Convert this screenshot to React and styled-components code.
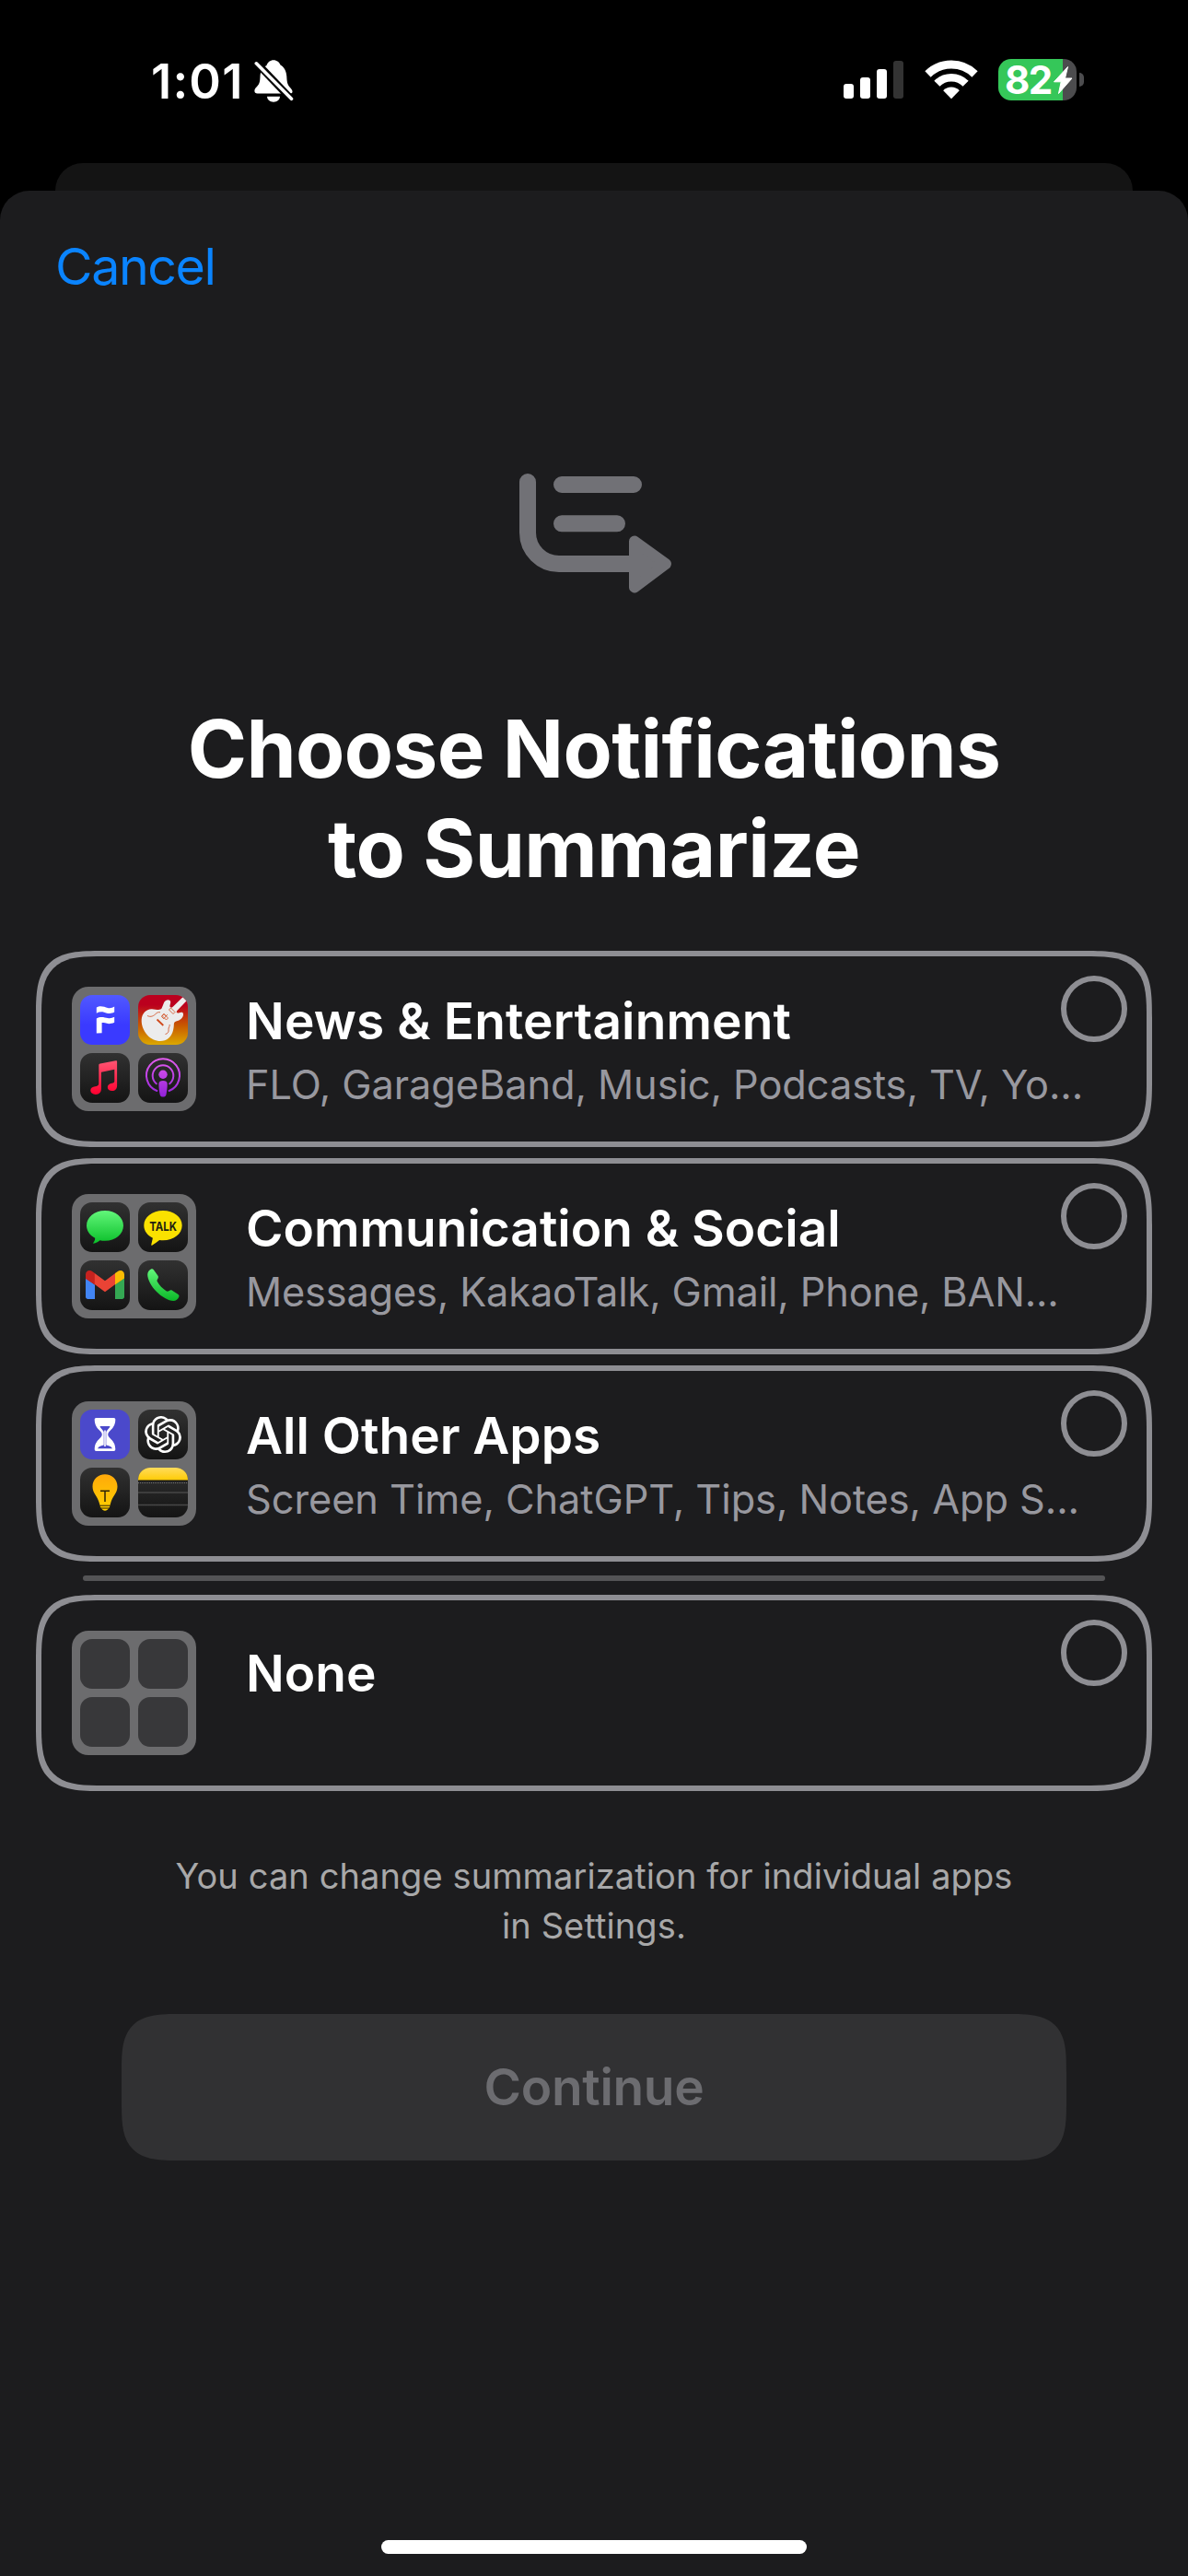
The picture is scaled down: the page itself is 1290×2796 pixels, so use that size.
import styled, { createGlobalStyle } from "styled-components"
import { SiOpenai } from "react-icons/si"

const GlobalStyle = createGlobalStyle`
* { box-sizing: border-box; }
body {
  margin: 0;
  background: #000;
  font-family: Inter, "Liberation Sans", sans-serif;
}
`
const Screen = styled.div`
display:flex;
flex-direction:column;
width:1290px;
height:2796px;
overflow:hidden;
background:#000;
`
const StatusBar = styled.header`
display:flex;
justify-content:space-between;
align-items:flex-start;
height:177px;
padding:64px 113px 0 164px;
color:#fff;
`
const StatusLeft = styled.div`
display:flex;
gap:16px;
`
const Time = styled.div`
width:96px;
font-size:52.5px;
font-weight:600;
line-height:48px;
letter-spacing:1.2px;
white-space:nowrap;
`
const StatusRight = styled.div`
display:flex;
align-items:flex-start;
`
const Signal = styled.div`
display:flex;
align-items:flex-end;
gap:7px;
height:43px;
margin-right:23px;
`
const SignalBar = styled.div`
width:11px;
height:${props => props.$height}px;
border-radius:3px;
background:${props => props.$off ? '#333333' : '#fff'};
`
const WifiIcon = styled.svg`
width:58px;
height:44px;
margin-right:22px;
`
const Battery = styled.div`
display:flex;
align-items:center;
gap:3px;
`
const BatteryBody = styled.div`
display:flex;
align-items:center;
width:85px;
height:45px;
padding-left:7px;
border-radius:14px;
background:linear-gradient(to right, #35c759 70px, #4c4c4e 70px);
font-size:42px;
font-weight:700;
letter-spacing:-1.5px;
line-height:45px;
`
const BatteryLevel = styled.span`
width:52px;
`
const BatteryCap = styled.div`
width:5px;
height:15px;
border-radius:0 5px 5px 0;
background:#4c4c4e;
`
const BackSheet = styled.div`
height:30px;
margin:0 60px;
border-radius:30px 30px 0 0;
background:#141414;
`
const Sheet = styled.main`
display:flex;
flex-direction:column;
flex:1;
padding-top:49px;
border-radius:32px 32px 0 0;
background:#1c1c1e;
`
const Cancel = styled.button`
align-self:flex-start;
margin:0 0 190px 60px;
padding:0;
border:0;
background:none;
color:#0a84ff;
font:400 55.5px/66px Inter, sans-serif;
letter-spacing:-1.4px;
`
const HeroIcon = styled.svg`
display:block;
width:170px;
height:135px;
margin:0 0 112px 562px;
`
const Title = styled.h1`
margin:0 0 57px;
text-align:center;
color:#fff;
font-size:87px;
font-weight:700;
line-height:108px;
letter-spacing:-0.6px;
`
const Options = styled.div`
display:flex;
flex-direction:column;
gap:12px;
margin:0 39px;
`
const Card = styled.div`
display:grid;
grid-template-columns:135px 1fr 72px;
grid-template-rows:100px 101px;
height:213px;
padding:0 21px 0 33px;
border:6px solid #8e8e93;
border-radius:54px;
@supports (corner-shape: superellipse(1.7)) {
  border-radius:73px;
  corner-shape:superellipse(1.7);
}
`
const Folder = styled.div`
grid-row:1 / 3;
display:grid;
grid-template-columns:54px 54px;
grid-template-rows:54px 54px;
gap:9px;
align-self:center;
height:135px;
padding:9px;
border-radius:18px;
background:#6c6c6e;
`
const AppTile = styled.div`
display:flex;
align-items:center;
justify-content:center;
overflow:hidden;
border-radius:13px;
background:${props => props.$bg || 'linear-gradient(#313131, #141414)'};
color:#fff;
`
const CardTitle = styled.div`
margin:${props => props.$solo ? 49 : 40}px 0 0 54px;
color:#fff;
font-size:55px;
font-weight:600;
line-height:60px;
letter-spacing:${props => props.$spacing || 0}px;
white-space:nowrap;
`
const CardApps = styled.div`
grid-column:2 / 4;
margin:13px 0 0 54px;
color:#98989f;
font-size:43.3px;
line-height:52px;
letter-spacing:${props => props.$spacing || 0}px;
white-space:nowrap;
`
const Radio = styled.div`
width:72px;
height:72px;
margin-top:21px;
border:6px solid #8e8e93;
border-radius:50%;
`
const Divider = styled.div`
height:6px;
margin:3px 51px;
border-radius:3px;
background:#545456;
`
const Note = styled.p`
margin:65px 0 69px;
text-align:center;
color:#a8a8a9;
font-size:38px;
line-height:54px;
letter-spacing:0.1px;
`
const Continue = styled.button`
height:159px;
margin:0 132px;
padding:0 0 1px;
border:0;
background:#313133;
color:#6c6c70;
font:600 55px/60px Inter, sans-serif;
letter-spacing:-0.3px;
border-radius:44px;
@supports (corner-shape: superellipse(1.7)) {
  border-radius:64px;
  corner-shape:superellipse(1.7);
}
`
const HomeIndicator = styled.div`
width:462px;
height:15px;
margin:auto auto 24px;
border-radius:8px;
background:#fff;
`

const Art = ({ children }) => <svg width="54" height="54" viewBox="0 0 54 54">{children}</svg>

const Gradient = ({ id, from, to }) => (
  <linearGradient id={id} x1="0" y1="0" x2="0" y2="1">
    <stop offset="0" stopColor={from} />
    <stop offset="1" stopColor={to} />
  </linearGradient>
)

const Flo = () => (
  <AppTile $bg="linear-gradient(#5159ff, #3a3aff 60%)">
    <Art>
      <g fill="#fff">
        <path d="M17.8 13.6C22 11 26.500 13.200 30 14C32.500 14.500 35 14 37.200 12.600V18.600C33 21 29.500 19.800 26 18.700C23 17.900 20.500 18.300 17.800 19.700Z" />
        <path d="M17.8 25.500C22 22.800 26.500 24.300 30 25C32.500 25.500 35 25 37.200 23.800V29.700C33 31.600 30 31.400 27 30.300C25.500 29.800 24.500 29.800 23.600 30V41.200L17.800 41.600Z" />
      </g>
    </Art>
  </AppTile>
)

const GarageBand = () => (
  <AppTile $bg="linear-gradient(#bb001e 20%, #c85a00 62%, #dba800)">
    <Art>
      <path fill="#ececec" d="M25.500 14.600C27 12 27.500 7.500 30 6C32 4.600 35 5 35.200 7.500C35.400 9.500 33.700 12 35 13.200C36 14 37 13.600 38 12.600L48.500 2.200L52.600 6.200L42.300 17C41 18.500 42 20 44 19.500C46 19 48.500 17.800 49 20.500C49.500 23.500 46.500 27 43 28C39.500 28.800 39 29.500 38.800 33C38.500 40 35.500 47 29 49.300C22 51.500 14.500 48.500 10 43.500C5.500 38.500 3.300 32 3.700 26.500C4.200 20 8.500 15.500 14.500 15.200C18.500 15 23.500 17.500 25.500 14.600Z" />
      <g fill="none" stroke="#cf4a1c" strokeWidth="0.8">
        <path d="M10 22.500C14 24.500 17 22.500 19 20.500C20.500 19 22 18.300 24 18.800" />
        <path d="M28 20.500L30.200 22.800L31.500 21.500L27.800 25.800L25.500 23.500Z" />
        <path d="M33.500 16L35.500 14L40 18.500L38 20.500ZM26 22.500L28 20.500L32.500 25L30.500 27Z" />
        <path d="M20.500 26.500L27.300 33" strokeWidth="1.800" />
        <path d="M29.500 42.500C32 42 33.500 40 33 37.500C32.700 35.500 34.500 34 34.200 32" />
      </g>
    </Art>
  </AppTile>
)

const Music = () => (
  <AppTile>
    <Art>
      <defs><Gradient id="music" from="#ff5572" to="#ff0030" /></defs>
      <path fill="url(#music)" d="M20.300 13.200C20.300 12.200 20.800 11.700 21.700 11.500L38.700 8.200C39.600 8 40.100 8.500 40.100 9.400V35.500C40.100 39 38 41 34.800 41C31.800 41 29.800 39.500 29.800 37C29.800 34.500 31.800 33.200 34.500 32.700C36.500 32.300 37.300 31.700 37.300 30.200V17.700L22.900 20.800V39C22.900 42.500 20.500 44.900 17 44.900C13.500 44.900 11.300 43 11.300 40.600C11.300 38 13.500 36.800 16.300 36.300C18.700 35.900 20.300 35.200 20.300 33Z" />
    </Art>
  </AppTile>
)

const Podcasts = () => (
  <AppTile>
    <Art>
      <defs>
        <linearGradient id="pod" gradientUnits="userSpaceOnUse" x1="0" y1="6" x2="0" y2="48">
          <stop offset="0" stopColor="#e45cf0" />
          <stop offset="1" stopColor="#9020d8" />
        </linearGradient>
      </defs>
      <g fill="none" stroke="url(#pod)" strokeWidth="2" strokeLinecap="round">
        <path d="M20.400 41A18 18 0 1 1 33.600 41" />
        <path d="M19.800 33.300A11.300 11.300 0 1 1 34.200 33.300" />
      </g>
      <circle cx="27" cy="23.300" r="4.700" fill="url(#pod)" />
      <path fill="url(#pod)" d="M22.400 33.500C22.400 31 24.200 30 27 30C29.800 30 31.700 31 31.700 33.500C31.700 37.500 31 42 30.500 45C30.100 46.900 28.800 47.600 27 47.600C25.200 47.600 24 46.900 23.600 45C23 42 22.400 37.500 22.400 33.500Z" />
    </Art>
  </AppTile>
)

const Messages = () => (
  <AppTile>
    <Art>
      <defs><Gradient id="msg" from="#62f67a" to="#0bbf2a" /></defs>
      <path fill="url(#msg)" d="M27 9C38.500 9 47 16.200 47 25.300C47 34.500 38.500 41.800 27 41.800C25 41.800 23.200 41.600 21.500 41.200C19.500 43 17 44.300 14.500 44.700C14.100 44.700 14 44.300 14.300 44C15.500 42.500 16.300 40.800 16.200 38.800C10.500 36 7 31 7 25.300C7 16.200 15.500 9 27 9Z" />
    </Art>
  </AppTile>
)

const KakaoTalk = () => (
  <AppTile>
    <Art>
      <path fill="#fae100" d="M27 9C38.800 9 47.700 16 47.700 25C47.700 34.200 38.800 41.300 27 41.300C25.700 41.300 24.400 41.200 23.200 41C20.500 43 17.800 45 15.400 46.500C14.600 47 14.100 46.500 14.300 45.700L15.900 38.700C10 36 6.300 31 6.300 25C6.300 16 15.200 9 27 9Z" />
      <text x="12.200" y="30.700" fontSize="13.500" fontWeight="700" textLength="29.800" lengthAdjust="spacingAndGlyphs" fill="#221f10">TALK</text>
    </Art>
  </AppTile>
)

const Gmail = () => (
  <AppTile>
    <Art>
      <path fill="#4285f4" d="M6 19L16 26.500V42H8.500C7 42 6 41 6 39.500Z" />
      <path fill="#34a853" d="M48 19L38 26.500V42H45.500C47 42 48 41 48 39.500Z" />
      <path fill="#c5221f" d="M6 20V15.500C6 11.200 10.200 9.800 13.500 12.200L16 14V26.500L6 20Z" />
      <path fill="#ea4335" d="M15.800 14L27 22.300L38.200 14V26L27 34.300L15.800 26Z" />
      <path fill="#fbbc04" d="M38 14L40.500 12.200C43.800 9.800 48 11.200 48 15.500V19.500L38 26.500Z" />
    </Art>
  </AppTile>
)

const Phone = () => (
  <AppTile>
    <Art>
      <defs><Gradient id="phone" from="#62f67a" to="#0bb828" /></defs>
      <path fill="url(#phone)" d="M10.200 15.500C10.200 12.500 12 10.400 14 9.500C15.200 9 16.200 9.300 17 10.500L21.500 16.800C22.200 17.900 22 18.900 21.300 20C20.600 21.200 20.200 22 20.900 23.300C23 27 26.500 30.700 30.500 33.300C31.700 34.100 32.600 33.800 33.700 33C34.800 32.300 35.800 32 37 32.700L43.200 36.700C44.500 37.500 44.700 38.500 44.200 39.700C43.200 42.200 41 44 38.200 44C33 44 25.500 39.600 20 34C14.200 28.300 10.200 20.500 10.200 15.500Z" />
    </Art>
  </AppTile>
)

const ScreenTime = () => (
  <AppTile $bg="#4b49cb">
    <Art>
      <path fill="#fff" d="M17.500 9H36.500C37.700 9 38.300 9.700 38.300 10.800C38.300 17 35.500 20 32.500 23C29.500 26 29.500 28 32.500 31C35.500 34 38.300 37 38.300 43C38.300 44.300 37.700 45 36.500 45H17.500C16.300 45 15.700 44.300 15.700 43C15.700 37 18.500 34 21.500 31C24.500 28 24.500 26 21.500 23C18.500 20 15.700 17 15.700 10.800C15.700 9.700 16.300 9 17.500 9Z" />
      <path fill="#4b49cb" d="M21.500 18H32.500C32 20 30 21.500 28.300 24V38.500C31 39 34 40 35 42.300H19C20 40 23 39 25.700 38.500V24C24 21.500 22 20 21.500 18Z" />
      <path stroke="#fff" strokeWidth="1.600" d="M27 22.500V40" />
    </Art>
  </AppTile>
)

const ChatGPT = () => <AppTile><SiOpenai size={40} /></AppTile>

const Tips = () => (
  <AppTile>
    <Art>
      <defs><Gradient id="tips" from="#ffa90a" to="#ffd000" /></defs>
      <path fill="url(#tips)" d="M27 7.300C34.800 7.300 40.500 13 40.500 20.500C40.500 28 34.800 31 33 39C32.500 41 32.300 42.500 31.500 43.500C30 46 28.500 46.700 27 46.700C25.500 46.700 24 46 22.500 43.500C21.700 42.500 21.500 41 21 39C19.200 31 13.500 28 13.500 20.500C13.500 13 19.200 7.300 27 7.300Z" />
      <path fill="none" stroke="#2a2208" strokeWidth="1" d="M20 41.200H34M21 44H33" />
      <path fill="none" stroke="#2a2208" strokeWidth="1.500" d="M22 25.200H32M27 25.200V37" />
    </Art>
  </AppTile>
)

const Notes = () => (
  <AppTile>
    <Art>
      <defs><Gradient id="notes" from="#ffdc5c" to="#ffcb05" /></defs>
      <rect width="54" height="13.700" fill="url(#notes)" />
      <path d="M0 14.200H54" stroke="#111" strokeWidth="1" />
      <path d="M0 16.600H54" stroke="#777" strokeWidth="1" strokeDasharray="1 1" />
      <path d="M0 27H54M0 40.500H54" stroke="#474747" strokeWidth="1.600" />
    </Art>
  </AppTile>
)

const Blank = () => <AppTile $bg="#38383a" />

const options = [
  {
    title: 'News & Entertainment',
    apps: 'FLO, GarageBand, Music, Podcasts, TV, Yo...',
    icons: [Flo, GarageBand, Music, Podcasts],
    titleSpacing: 0.12,
    appsSpacing: -0.06,
  },
  {
    title: 'Communication & Social',
    apps: 'Messages, KakaoTalk, Gmail, Phone, BAN...',
    icons: [Messages, KakaoTalk, Gmail, Phone],
    appsSpacing: -0.15,
  },
  {
    title: 'All Other Apps',
    apps: 'Screen Time, ChatGPT, Tips, Notes, App S...',
    icons: [ScreenTime, ChatGPT, Tips, Notes],
    appsSpacing: -0.05,
  },
]

const Option = ({ title, apps, icons, titleSpacing, appsSpacing }) => (
  <Card>
    <Folder>
      {icons.map((Icon, idx) => <Icon key={idx} />)}
    </Folder>
    <CardTitle $solo={!apps} $spacing={titleSpacing}>{title}</CardTitle>
    <Radio />
    {apps && <CardApps $spacing={appsSpacing}>{apps}</CardApps>}
  </Card>
)

const App = () => {
  return (
    <>
      <GlobalStyle />
      <Screen>
        <StatusBar>
          <StatusLeft>
            <Time>1:01</Time>
            <svg width="44" height="48" viewBox="0 0 44 48">
              <path fill="#fff" d="M13.500 7C14.500 3.500 17.500 1.200 21 1.200C24.500 1.200 27.500 3.500 28.500 6.500C33 9 35 14 35.300 19C35.600 25 36 27.500 39 31C41 33 41.700 34.500 41.500 36C41.200 37.300 40 37.500 38 37.500H3.500C1.500 37.500 0.400 36.500 0.400 34.800C0.400 33 1 32 3 30C6 27 6.300 24 6.500 19C6.700 14 9 9.500 13.500 7Z" />
              <path fill="#fff" d="M14 40.800H28C27.800 44.300 24.800 46.700 21 46.700C17.200 46.700 14.200 44.300 14 40.800Z" />
              <path stroke="#000" strokeWidth="8" d="M0 1.500L42 45.500" />
              <path stroke="#fff" strokeWidth="3.600" strokeLinecap="round" d="M2.300 4.800L40.500 43.300" />
            </svg>
          </StatusLeft>
          <StatusRight>
            <Signal>
              <SignalBar $height={16} />
              <SignalBar $height={23} />
              <SignalBar $height={32} />
              <SignalBar $height={41} $off />
            </Signal>
            <WifiIcon viewBox="0 0 58 44">
              <g fill="none" stroke="#fff">
                <path strokeWidth="9" d="M3.500 16.500A36.500 36.500 0 0 1 54.500 16.500" />
                <path strokeWidth="8.600" d="M13.400 26.700A22 22 0 0 1 44.600 26.700" />
              </g>
              <path fill="#fff" d="M29 43.300L20.200 34.200A12.400 12.400 0 0 1 37.800 34.200Z" />
            </WifiIcon>
            <Battery>
              <BatteryBody>
                <BatteryLevel>82</BatteryLevel>
                <svg width="22" height="32" viewBox="0 0 22 32">
                  <path fill="#fff" stroke="#fff" strokeWidth="1" strokeLinejoin="round" d="M16.500 1.500L1.500 17.800H9.200L6.500 30.500L21 14H13.500Z" />
                </svg>
              </BatteryBody>
              <BatteryCap />
            </Battery>
          </StatusRight>
        </StatusBar>
        <BackSheet />
        <Sheet>
          <Cancel>Cancel</Cancel>
          <HeroIcon viewBox="0 0 170 135">
            <g fill="none" stroke="#717176" strokeWidth="18" strokeLinecap="round">
              <path d="M11 11V66A34 34 0 0 0 45 100H125" strokeLinejoin="round" />
              <path d="M48 14H126M48 56.300H108" />
            </g>
            <path fill="#717176" stroke="#717176" strokeWidth="12" strokeLinejoin="round" d="M127 75.500L161 100L127 125.500Z" />
          </HeroIcon>
          <Title>Choose Notifications<br />to Summarize</Title>
          <Options>
            {options.map(option => <Option key={option.title} {...option} />)}
            <Divider />
            <Option title="None" icons={[Blank, Blank, Blank, Blank]} />
          </Options>
          <Note>You can change summarization for individual apps<br />in Settings.</Note>
          <Continue>Continue</Continue>
          <HomeIndicator />
        </Sheet>
      </Screen>
    </>
  )
}
export default App
